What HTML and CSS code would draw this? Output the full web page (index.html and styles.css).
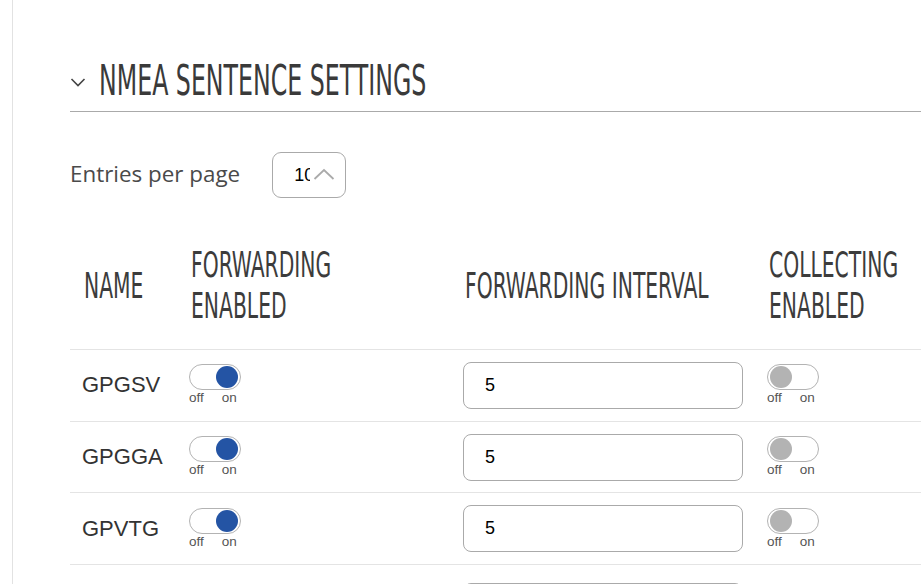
FILE: index.html
```html
<!DOCTYPE html>
<html>
<head>
<meta charset="utf-8">
<link rel="stylesheet" href="styles.css">
</head>
<body>
<div class="page">
  <div class="section-head">
    <svg class="chev" width="16" height="10" viewBox="0 0 16 10"><path d="M1.5 2 L8 8.5 L14.5 2" fill="none" stroke="#444" stroke-width="1.6"/></svg>
    <h2 class="title"><span class="cond">NMEA SENTENCE SETTINGS</span></h2>
  </div>

  <div class="entries">
    <span class="entries-label">Entries per page</span>
    <div class="select">
      <span class="select-val">10</span>
      <svg class="select-chev" width="22" height="12" viewBox="0 0 22 12"><path d="M1.5 11 L11 2 L20.5 11" fill="none" stroke="#aaa" stroke-width="1.8"/></svg>
    </div>
  </div>

  <div class="table">
    <div class="row head">
      <div class="cell name-cell"><span class="cond hx">NAME</span></div>
      <div class="cell"><span class="cond hx">FORWARDING<br>ENABLED</span></div>
      <div class="cell"><span class="cond hx">FORWARDING INTERVAL</span></div>
      <div class="cell"><span class="cond hx">COLLECTING<br>ENABLED</span></div>
    </div>

    <div class="row">
      <div class="cell name-cell name">GPGSV</div>
      <div class="cell"><div class="switch"><div class="track on"><span class="knob"></span></div><div class="labels"><span>off</span><span>on</span></div></div></div>
      <div class="cell"><div class="input">5</div></div>
      <div class="cell"><div class="switch"><div class="track"><span class="knob"></span></div><div class="labels"><span>off</span><span>on</span></div></div></div>
    </div>

    <div class="row">
      <div class="cell name-cell name">GPGGA</div>
      <div class="cell"><div class="switch"><div class="track on"><span class="knob"></span></div><div class="labels"><span>off</span><span>on</span></div></div></div>
      <div class="cell"><div class="input">5</div></div>
      <div class="cell"><div class="switch"><div class="track"><span class="knob"></span></div><div class="labels"><span>off</span><span>on</span></div></div></div>
    </div>

    <div class="row">
      <div class="cell name-cell name">GPVTG</div>
      <div class="cell"><div class="switch"><div class="track on"><span class="knob"></span></div><div class="labels"><span>off</span><span>on</span></div></div></div>
      <div class="cell"><div class="input">5</div></div>
      <div class="cell"><div class="switch"><div class="track"><span class="knob"></span></div><div class="labels"><span>off</span><span>on</span></div></div></div>
    </div>

    <div class="row partial">
      <div class="cell name-cell name"></div>
      <div class="cell"></div>
      <div class="cell"><div class="input">5</div></div>
      <div class="cell"></div>
    </div>
  </div>
</div>
</body>
</html>
```

FILE: styles.css
```css
html, body {
  margin: 0;
  padding: 0;
  background: #fff;
  overflow: hidden;
}
body {
  width: 921px;
  height: 584px;
  font-family: "Liberation Sans", Arial, sans-serif;
}
.page {
  margin-left: 12px;
  border-left: 1px solid #e2e2e2;
  padding-left: 57px;
  padding-top: 56px;
  height: 584px;
  box-sizing: border-box;
  overflow: hidden;
}
.cond {
  font-family: "DejaVu Sans Condensed", "Liberation Sans", sans-serif;
  display: inline-block;
  transform-origin: left center;
  white-space: nowrap;
}
.section-head {
  display: flex;
  align-items: center;
  gap: 13px;
  border-bottom: 1px solid #aaaaaa;
  padding-bottom: 5px;
}
.chev {
  flex: none;
  margin-top: 2px;
}
.title {
  margin: 0;
  font-size: 42px;
  line-height: 50px;
  font-weight: normal;
  color: #3a3a3a;
}
.title .cond {
  transform: scaleX(0.627);
}
.entries {
  display: flex;
  align-items: center;
  gap: 32px;
  margin-top: 40px;
}
.entries-label {
  font-family: "Open Sans", sans-serif;
  font-size: 22.4px;
  color: #4a4a4a;
  padding-bottom: 4px;
}
.select {
  width: 74px;
  height: 46px;
  box-sizing: border-box;
  border: 1px solid #aaaaaa;
  border-radius: 9px;
  display: flex;
  align-items: center;
  padding-left: 21px;
}
.select-val {
  display: inline-block;
  width: 16px;
  overflow: hidden;
  font-size: 18px;
  color: #000;
  white-space: nowrap;
}
.select-chev {
  margin-left: 3px;
  margin-top: -3px;
}
.table {
  margin-top: 25px;
  width: 900px;
}
.row {
  display: grid;
  grid-template-columns: 119px 274px 304px 1fr;
  align-items: center;
  height: 71.7px;
  box-sizing: border-box;
  border-top: 1px solid #e4e4e4;
}
.row.head {
  border-top: none;
  height: 126px;
}
.row.head .cell {
  padding-left: 2px;
}
.row.head .name-cell {
  padding-left: 14px;
}
.row.partial {
  align-items: start;
  padding-top: 18px;
}
.cell {
  min-width: 0;
}
.name-cell {
  padding-left: 12px;
}
.hx {
  font-size: 35px;
  line-height: 41px;
  color: #3c3c3c;
  transform: scaleX(0.645);
}
.name {
  font-size: 22px;
  color: #333;
}
.switch {
  width: 52px;
}
.track {
  width: 52px;
  height: 26px;
  box-sizing: border-box;
  border: 1px solid #b3b3b3;
  border-radius: 13px;
  display: flex;
  align-items: center;
  padding: 0 2px;
}
.track.on {
  justify-content: flex-end;
}
.knob {
  width: 22px;
  height: 22px;
  border-radius: 50%;
  background: #b3b3b3;
}
.track.on .knob {
  background: #2454a4;
}
.labels {
  display: flex;
  gap: 18px;
  font-size: 13.5px;
  line-height: 16px;
  color: #555;
}
.input {
  width: 280px;
  height: 47px;
  box-sizing: border-box;
  border: 1px solid #aaaaaa;
  border-radius: 8px;
  display: flex;
  align-items: center;
  padding-left: 21px;
  font-size: 18px;
  color: #000;
}
```
